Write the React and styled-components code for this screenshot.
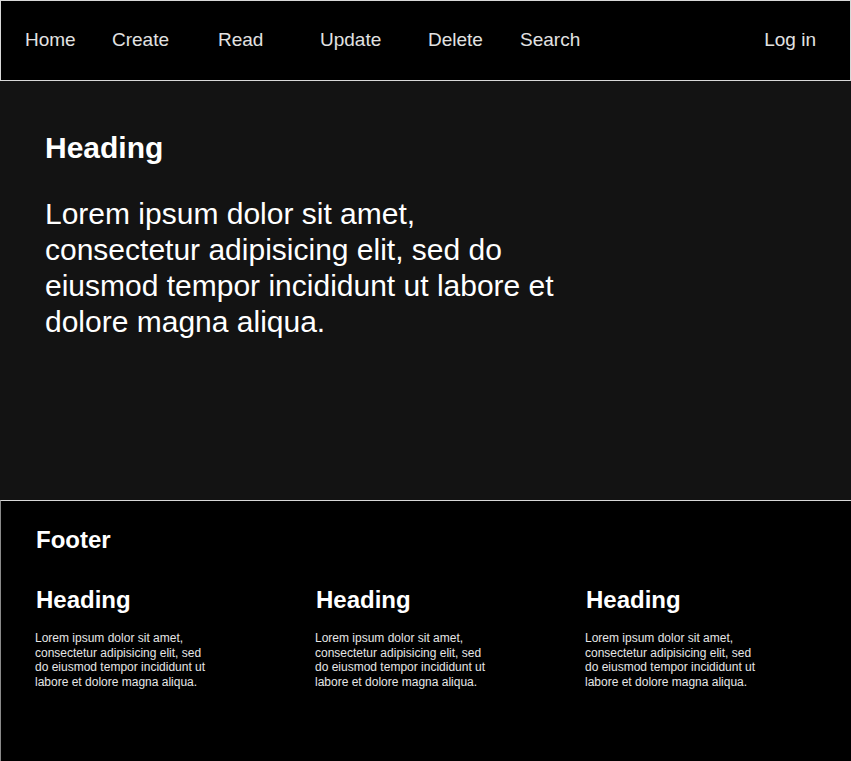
import React from "react";
import styled, { createGlobalStyle } from "styled-components";

const GlobalStyle = createGlobalStyle`
  html, body {
    margin: 0;
    padding: 0;
    background: #000;
    font-family: "Liberation Sans", Arial, sans-serif;
    overflow: hidden;
  }
`;

const Page = styled.div`
  display: flex;
  flex-direction: column;
  width: 851px;
  height: 761px;
`;

const NavBar = styled.nav`
  display: flex;
  align-items: center;
  height: 81px;
  box-sizing: border-box;
  border: 1px solid #d8d8d8;
  background: #000;
  padding: 0 0 2px 24px;
`;

const NavLink = styled.a`
  width: ${(p) => p.w}px;
  font-size: 19px;
  color: #e2e2e2;
  text-decoration: none;
  cursor: pointer;
`;

const Spacer = styled.div`
  flex: 1;
`;

const LoginLink = styled(NavLink)`
  width: auto;
  margin-right: 34px;
`;

const Hero = styled.main`
  height: 419px;
  box-sizing: border-box;
  background: #131313;
  padding: 49px 45px 0;
`;

const HeroTitle = styled.h1`
  margin: 0 0 30px;
  font-size: 30px;
  line-height: 36px;
  font-weight: bold;
  color: #fff;
`;

const HeroText = styled.p`
  margin: 0;
  max-width: 520px;
  font-size: 30px;
  line-height: 36px;
  color: #fff;
`;

const Footer = styled.footer`
  flex: 1;
  box-sizing: border-box;
  background: #000;
  border-top: 1px solid #d8d8d8;
  border-left: 1px solid #8a8a8a;
  padding: 25px 0 0 35px;
`;

const FooterTitle = styled.h2`
  margin: 0 0 32px;
  font-size: 24px;
  line-height: 28px;
  font-weight: bold;
  color: #fff;
`;

const Columns = styled.div`
  display: grid;
  grid-template-columns: 280px 270px 1fr;
`;

const Column = styled.div`
  display: flex;
  flex-direction: column;
`;

const ColumnTitle = styled.h3`
  margin: 0 0 17px;
  font-size: 24px;
  line-height: 28px;
  font-weight: bold;
  color: #fff;
`;

const ColumnText = styled.p`
  margin: 0 0 0 -1px;
  width: 176px;
  font-size: 12px;
  line-height: 14.6px;
  color: #e6e6e6;
`;

const links = [
  { label: "Home", w: 87 },
  { label: "Create", w: 106 },
  { label: "Read", w: 102 },
  { label: "Update", w: 108 },
  { label: "Delete", w: 92 },
  { label: "Search", w: 80 },
];

const lorem =
  "Lorem ipsum dolor sit amet, consectetur adipisicing elit, sed do eiusmod tempor incididunt ut labore et dolore magna aliqua.";

const App = () => {
  return (
    <Page>
      <GlobalStyle />
      <NavBar>
        {links.map((l) => (
          <NavLink key={l.label} w={l.w}>
            {l.label}
          </NavLink>
        ))}
        <Spacer />
        <LoginLink>Log in</LoginLink>
      </NavBar>
      <Hero>
        <HeroTitle>Heading</HeroTitle>
        <HeroText>{lorem}</HeroText>
      </Hero>
      <Footer>
        <FooterTitle>Footer</FooterTitle>
        <Columns>
          {[0, 1, 2].map((i) => (
            <Column key={i}>
              <ColumnTitle>Heading</ColumnTitle>
              <ColumnText>{lorem}</ColumnText>
            </Column>
          ))}
        </Columns>
      </Footer>
    </Page>
  );
};

export default App;
